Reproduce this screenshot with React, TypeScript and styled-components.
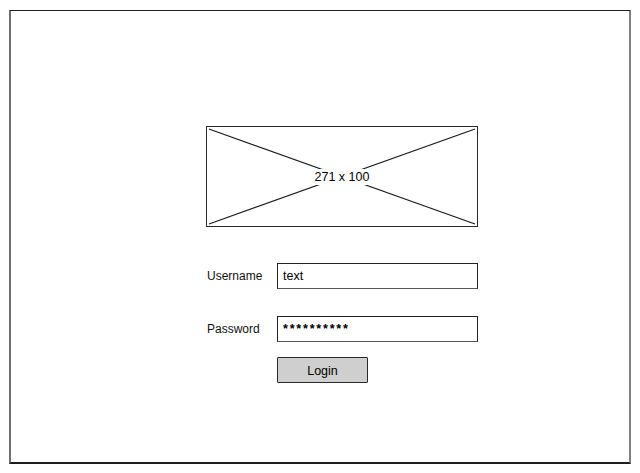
import React from 'react';
import styled, { createGlobalStyle } from 'styled-components';

const GlobalStyle = createGlobalStyle`
  html, body {
    margin: 0;
    padding: 0;
    background: #ffffff;
  }

  body {
    font-family: 'Liberation Sans', Arial, sans-serif;
    color: #111111;
  }
`;

const Frame = styled.div`
  box-sizing: border-box;
  margin: 10px 0 0 9px;
  width: 622px;
  height: 454px;
  border-top: 1px solid #1e1e1e;
  border-bottom: 2px solid #1e1e1e;
  border-left: 2px solid #707070;
  border-right: 2px solid #808080;
  padding: 115px 0 0 195px;
`;

const Column = styled.div`
  width: 272px;
`;

const Placeholder = styled.div`
  position: relative;
  box-sizing: border-box;
  width: 272px;
  height: 101px;
  border: 1px solid #2a2a2a;
  display: flex;
  align-items: center;
  justify-content: center;
`;

const CrossLines = styled.svg`
  position: absolute;
  inset: 0;
  width: 100%;
  height: 100%;
`;

const Caption = styled.span`
  position: relative;
  background: #ffffff;
  padding: 0 3px;
  font-size: 12.5px;
  line-height: 16px;
  color: #000000;
`;

const Form = styled.div`
  margin-top: 36px;
`;

const FieldRow = styled.div<{ $gap?: number }>`
  display: grid;
  grid-template-columns: 71px 201px;
  align-items: center;
  height: 26px;
  margin-top: ${(p) => p.$gap ?? 0}px;
`;

const Label = styled.label`
  padding-left: 1px;
  font-size: 12px;
  color: #111111;
`;

const TextField = styled.input<{ $masked?: boolean }>`
  box-sizing: border-box;
  width: 201px;
  height: 26px;
  margin: 0;
  padding: 0 0 0 5px;
  border: 1px solid #222222;
  border-bottom-color: #555555;
  border-radius: 0;
  background: #ffffff;
  font-family: 'Liberation Sans', Arial, sans-serif;
  font-size: 12.5px;
  font-weight: ${(p) => (p.$masked ? 700 : 400)};
  letter-spacing: ${(p) => (p.$masked ? '1.8px' : '0')};
  color: #000000;
  outline: none;
`;

const ButtonRow = styled.div`
  margin: 15px 0 0 71px;
`;

const Button = styled.button`
  box-sizing: border-box;
  width: 91px;
  height: 26px;
  margin: 0;
  padding: 2px 0 0;
  border: 1px solid #2a2a2a;
  border-radius: 1px;
  background: #cfcfcf;
  font-family: 'Liberation Sans', Arial, sans-serif;
  font-size: 12.5px;
  color: #000000;
`;

export default function App() {
  return (
    <>
      <GlobalStyle />
      <Frame>
        <Column>
          <Placeholder>
            <CrossLines viewBox="0 0 272 101" preserveAspectRatio="none">
              <line x1="2" y1="2" x2="270" y2="99" stroke="#1a1a1a" strokeWidth="1.2" />
              <line x1="270" y1="2" x2="2" y2="99" stroke="#1a1a1a" strokeWidth="1.2" />
            </CrossLines>
            <Caption>271 x 100</Caption>
          </Placeholder>

          <Form>
            <FieldRow>
              <Label>Username</Label>
              <TextField readOnly value="text" />
            </FieldRow>
            <FieldRow $gap={27}>
              <Label>Password</Label>
              <TextField readOnly $masked value="**********" />
            </FieldRow>
            <ButtonRow>
              <Button>Login</Button>
            </ButtonRow>
          </Form>
        </Column>
      </Frame>
    </>
  );
}
